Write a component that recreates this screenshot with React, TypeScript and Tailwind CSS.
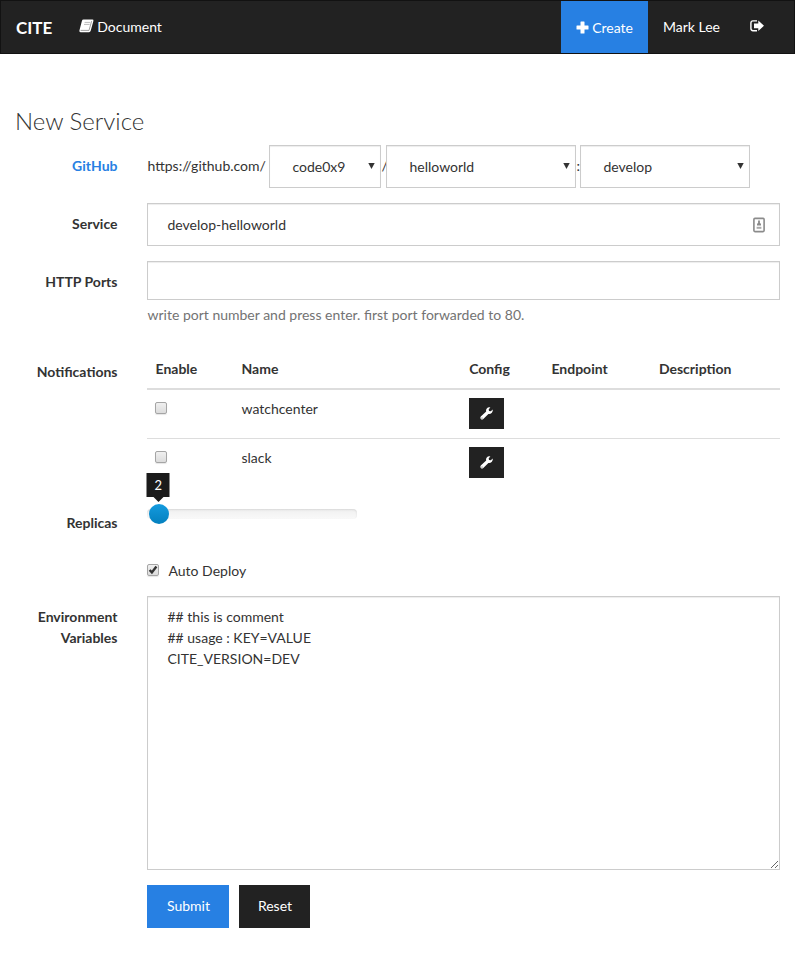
import { useState, type ReactNode } from "react";

const fieldClass =
  "block w-full border border-[#cccccc] bg-white px-[19px] shadow-[inset_0_1px_1px_rgba(0,0,0,0.075)] outline-none focus:border-[#66afe9]";

function BookIcon() {
  return (
    <svg width="15" height="14" viewBox="0 0 15 14" aria-hidden="true">
      <path d="M4.6 0.6H13.4Q14.8 0.6 14.4 2L11.7 11.8Q11.3 13.2 10 13.2H1.6Q0 13.2 0.4 11.6L2.9 2Q3.2 0.6 4.6 0.6Z" fill="#fff" />
      <path d="M5.6 3.4H11.2M5 5.4H10.6" stroke="#bbb" strokeWidth="1" />
      <path d="M1.6 11.4H10L12.6 2.2" stroke="#888" strokeWidth="0.8" fill="none" />
    </svg>
  );
}

function PlusIcon() {
  return (
    <svg width="13" height="13" viewBox="0 0 13 13" aria-hidden="true">
      <path d="M5 0.5H8Q8.5 0.5 8.5 1V4.5H12Q12.5 4.5 12.5 5V8Q12.5 8.5 12 8.5H8.5V12Q8.5 12.5 8 12.5H5Q4.5 12.5 4.5 12V8.5H1Q0.5 8.5 0.5 8V5Q0.5 4.5 1 4.5H4.5V1Q4.5 0.5 5 0.5Z" fill="#fff" />
    </svg>
  );
}

function LogOutIcon() {
  return (
    <svg width="14" height="12" viewBox="0 0 14 12" aria-hidden="true">
      <path d="M7 0.9H3Q0.9 0.9 0.9 3V8.6Q0.9 10.7 3 10.7H7" stroke="#fff" strokeWidth="1.4" fill="none" />
      <path d="M8.3 0.6L14 5.8L8.3 11V8.2H4V3.4H8.3Z" fill="#fff" />
    </svg>
  );
}

function WrenchIcon() {
  return (
    <svg width="13" height="13" viewBox="0 0 13 13" aria-hidden="true">
      <path d="M10.4 0.4Q8.2 -0.2 6.8 1.4Q5.7 2.8 6.2 4.5L0.8 9.5Q-0.1 10.8 0.8 12Q2 13 3.3 12L8.4 7Q10.2 7.4 11.6 6.1Q13.1 4.6 12.6 2.6L10.9 4.3L9 4L8.7 2.2Z" fill="#fff" />
      <circle cx="2" cy="11" r="0.5" fill="#222" />
    </svg>
  );
}

function ContactCardIcon() {
  return (
    <svg width="12" height="16" viewBox="0 0 12 16" aria-hidden="true">
      <rect x="0.9" y="1.4" width="10.2" height="13.2" rx="1" fill="#fff" stroke="#8b8b8b" strokeWidth="1.6" />
      <path d="M5.1 3.5H6.9V5.8L8 7V8.6H4V7L5.1 5.8Z" fill="#8b8b8b" />
      <rect x="3.6" y="9.8" width="4.8" height="2" fill="#aaa" />
    </svg>
  );
}

function Row({ label, htmlFor, children, labelClass = "pt-[10px]" }: { label?: ReactNode; htmlFor?: string; children: ReactNode; labelClass?: string }) {
  return (
    <div className="flex">
      <div className={`w-1/6 shrink-0 pr-[15px] text-right font-bold ${labelClass}`}>
        {htmlFor ? <label htmlFor={htmlFor}>{label}</label> : label}
      </div>
      <div className="w-5/6 min-w-0 px-[15px]">{children}</div>
    </div>
  );
}

function Picker({ label, value, width }: { label: string; value: string; width: string }) {
  return (
    <span className={`relative block ${width}`}>
      <select
        aria-label={label}
        defaultValue={value}
        className="h-[43px] w-full appearance-none border border-[#cccccc] bg-white pr-6 pl-[22px] shadow-[inset_0_1px_1px_rgba(0,0,0,0.075)] outline-none"
      >
        <option>{value}</option>
      </select>
      <svg className="pointer-events-none absolute top-[18px] right-[6px]" width="7" height="6" viewBox="0 0 7 6" aria-hidden="true">
        <path d="M0.3 0H6.7L3.5 6Z" fill="#333" />
      </svg>
    </span>
  );
}

function CheckBox({ id, label, checked = false }: { id: string; label?: string; checked?: boolean }) {
  return (
    <span className="relative block size-3">
      <input
        id={id}
        type="checkbox"
        aria-label={label}
        defaultChecked={checked}
        className="peer block size-3 appearance-none rounded-[2px] border border-[#a5a5a5] bg-linear-to-b from-[#f0f0f0] to-[#dcdcdc] shadow-[0_1px_1px_rgba(0,0,0,0.1)]"
      />
      <svg className="pointer-events-none absolute inset-0 hidden peer-checked:block" width="12" height="12" viewBox="0 0 12 12" aria-hidden="true">
        <path d="M2.6 6L4.9 8.4L9.4 2.6" fill="none" stroke="#333" strokeWidth="2.4" />
      </svg>
    </span>
  );
}

function Notifications() {
  return (
    <table className="w-full table-fixed">
      <colgroup>
        <col className="w-[13.6%]" />
        <col className="w-[36%]" />
        <col className="w-[13%]" />
        <col className="w-[17%]" />
        <col />
      </colgroup>
      <thead>
        <tr className="h-[40px] border-b-2 border-[#dddddd] text-left">
          {["Enable", "Name", "Config", "Endpoint", "Description"].map((h) => (
            <th key={h} className="px-2 font-bold">{h}</th>
          ))}
        </tr>
      </thead>
      <tbody>
        {["watchcenter", "slack"].map((name) => (
          <tr key={name} className="h-[49px] border-t border-[#dddddd] align-top first:border-t-0">
            <td className="px-2 pt-3">
              <CheckBox id={name} label={`Enable ${name}`} />
            </td>
            <td className="px-2 pt-2">{name}</td>
            <td className="px-2 pt-2">
              <button type="button" aria-label={`Configure ${name}`} className="flex h-[31px] w-[35px] items-center justify-center bg-[#222222]">
                <WrenchIcon />
              </button>
            </td>
            <td />
            <td />
          </tr>
        ))}
      </tbody>
    </table>
  );
}

function ReplicaSlider() {
  const [count, setCount] = useState(2);
  return (
    <div className="relative flex h-[54px] w-[210px] items-center">
      <input
        id="replicas"
        type="range"
        min={1}
        max={100}
        value={count}
        onChange={(e) => setCount(Number(e.target.value))}
        className="block h-[10px] w-full appearance-none rounded bg-linear-to-b from-[#f0f0f0] to-[#f9f9f9] shadow-[inset_0_1px_2px_rgba(0,0,0,0.1)] outline-none [&::-webkit-slider-thumb]:size-5 [&::-webkit-slider-thumb]:appearance-none [&::-webkit-slider-thumb]:rounded-full [&::-webkit-slider-thumb]:bg-linear-to-b [&::-webkit-slider-thumb]:from-[#149bdf] [&::-webkit-slider-thumb]:to-[#0480be]"
      />
      <output
        htmlFor="replicas"
        className="absolute -top-[14px] flex h-6 w-[23px] -translate-x-1/2 items-center justify-center bg-[#1b1b1b] text-[13px] text-white after:absolute after:top-full after:border-x-[5px] after:border-t-[5px] after:border-x-transparent after:border-t-[#1b1b1b] after:content-['']"
        style={{ left: 9 + ((count - 1) / 99) * 190 }}
      >
        {count}
      </output>
    </div>
  );
}

export default function App() {
  return (
    <div className="bg-white font-['Lato','Open_Sans',sans-serif] text-[14px] leading-[21px] text-[#333333]">
      <nav className="flex h-[54px] items-stretch border border-[#121212] bg-[#222222] px-[15px] text-white">
        <a href="#" className="flex items-center text-[17px] font-bold">CITE</a>
        <a href="#" className="ml-[27px] flex items-center gap-[3px] pb-[2px]">
          <BookIcon />
          Document
        </a>
        <div className="ml-auto flex">
          <a href="#" className="flex items-center gap-[3px] bg-[#2780e3] px-[15px]">
            <PlusIcon />
            Create
          </a>
          <a href="#" className="flex items-center px-[15px] pb-[2px]">Mark Lee</a>
          <a href="#" aria-label="Log out" className="flex items-center px-[15px] pb-[2px]">
            <LogOutIcon />
          </a>
        </div>
      </nav>

      <main className="pt-[53px] pb-[29px]">
        <h1 className="px-[15px] text-[24px] leading-[27px] font-light">New Service</h1>
        <form className="pt-[11px]" onSubmit={(e) => e.preventDefault()}>
          <Row label={<a href="#" className="text-[#2780e3]">GitHub</a>}>
            <div className="flex items-center">
              <span className="w-[122px] pb-[2px] whitespace-nowrap">https://github.com/</span>
              <Picker label="Owner" value="code0x9" width="w-[112px]" />
              <span className="w-[5px] pb-[2px]">/</span>
              <Picker label="Repository" value="helloworld" width="w-[190px]" />
              <span className="w-[4px] pb-[2px]">:</span>
              <Picker label="Branch" value="develop" width="w-[170px]" />
            </div>
          </Row>

          <div className="pt-[15px]">
            <Row label="Service" htmlFor="service">
              <div className="relative">
                <input id="service" defaultValue="develop-helloworld" className={`${fieldClass} h-[43px]`} />
                <span className="pointer-events-none absolute inset-y-0 right-[15px] flex items-center">
                  <ContactCardIcon />
                </span>
              </div>
            </Row>
          </div>

          <div className="pt-[15px]">
            <Row label="HTTP Ports" htmlFor="ports">
              <input id="ports" className={`${fieldClass} h-[39px]`} />
              <p className="pt-[4px] text-[#737373]">write port number and press enter. first port forwarded to 80.</p>
            </Row>
          </div>

          <div className="pt-[24px]">
            <Row label="Notifications" labelClass="pt-[12px]">
              <Notifications />
            </Row>
          </div>

          <Row label="Replicas" htmlFor="replicas" labelClass="pt-[25px]">
            <ReplicaSlider />
          </Row>

          <Row>
            <div className="flex h-[55px] items-center gap-[9px] pt-[3px]">
              <CheckBox id="auto-deploy" checked />
              <label htmlFor="auto-deploy">Auto Deploy</label>
            </div>
          </Row>

          <Row label="Environment Variables" htmlFor="environment">
            <textarea
              id="environment"
              defaultValue={"## this is comment\n## usage : KEY=VALUE\nCITE_VERSION=DEV"}
              className={`${fieldClass} h-[274px] resize py-[9px]`}
            />
          </Row>

          <div className="pt-[15px]">
            <Row>
              <div className="flex gap-[10px]">
                <button type="submit" className="h-[43px] w-[82px] bg-[#2780e3] pb-[2px] text-white">Submit</button>
                <button type="reset" className="h-[43px] w-[71px] bg-[#222222] pb-[2px] text-white">Reset</button>
              </div>
            </Row>
          </div>
        </form>
      </main>
    </div>
  );
}
